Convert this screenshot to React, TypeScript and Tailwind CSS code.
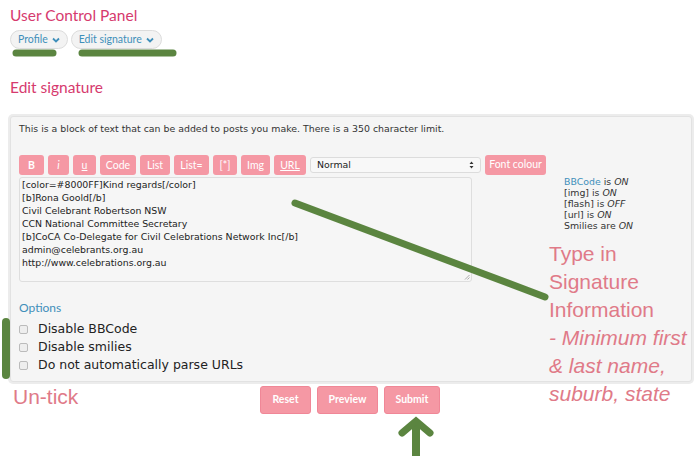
import React from "react";

const toolbar: { label: string; w: string; cls?: string }[] = [
  { label: "B", w: "w-[25px]", cls: "font-bold" },
  { label: "i", w: "w-[21px]", cls: "italic" },
  { label: "u", w: "w-[23px]", cls: "underline" },
  { label: "Code", w: "w-[36px]" },
  { label: "List", w: "w-[30px]" },
  { label: "List=", w: "w-[35px]" },
  { label: "[*]", w: "w-[24px]" },
  { label: "Img", w: "w-[29px]" },
  { label: "URL", w: "w-[32px]", cls: "underline" },
];

const signature = [
  "[color=#8000FF]Kind regards[/color]",
  "[b]Rona Goold[/b]",
  "Civil Celebrant Robertson NSW",
  "CCN National Committee Secretary",
  "[b]CoCA Co-Delegate for Civil Celebrations Network Inc[/b]",
  "admin@celebrants.org.au",
  "http://www.celebrations.org.au",
];

function Chevron() {
  return (
    <svg width="8" height="6" viewBox="0 0 8 6" className="ml-1">
      <path d="M1 1.5 L4 4.5 L7 1.5" stroke="#3f8fba" strokeWidth="1.8" fill="none" />
    </svg>
  );
}

function Pill({ label }: { label: string }) {
  return (
    <div className="flex items-center h-[19px] px-[7px] rounded-full border border-[#dcdcdc] bg-[#f3f3f3] text-[10.5px] text-[#3f8fba]">
      {label}
      <Chevron />
    </div>
  );
}

export default function App() {
  return (
    <div className="relative w-[700px] h-[456px] bg-white overflow-hidden font-['Lato',sans-serif]">
      <div className="px-[10px] pt-[5px]">
        <h1 className="text-[15.5px] text-[#d63a6e] leading-[20px]">User Control Panel</h1>
        <div className="flex gap-[3px] mt-[5px]">
          <Pill label="Profile" />
          <Pill label="Edit signature" />
        </div>
        <h2 className="text-[15.5px] text-[#d63a6e] leading-[20px] mt-[28px]">Edit signature</h2>
      </div>

      <div className="mx-[10px] mt-[19px] w-[682px] h-[266px] border border-[#e2e2e2] rounded-[3px] bg-[#f5f5f5] shadow-[0_0_0_2px_#ececec] font-['DejaVu_Sans',sans-serif] text-[#333]">
        <p className="text-[9.4px] pl-[8px] pt-[6px] leading-[12px]">
          This is a block of text that can be added to posts you make. There is a 350 character limit.
        </p>
        <div className="flex pl-[8px] mt-[20px]">
          <div className="w-[535px]">
            <div className="flex items-center gap-[4px] font-['Lato',sans-serif]">
              {toolbar.map((t) => (
                <button
                  key={t.label}
                  className={`h-[20px] ${t.w} rounded-[3px] bg-[#f598a4] text-white text-[10.5px] leading-none ${t.cls ?? ""}`}
                >
                  {t.label}
                </button>
              ))}
              <div className="w-[171px] h-[16px] border border-[#dcdcdc] rounded-[3px] bg-[#f8f8f8] flex items-center justify-between px-[6px] text-[9.4px] text-[#222] font-['DejaVu_Sans',sans-serif]">
                <span>Normal</span>
                <svg width="5" height="8" viewBox="0 0 5 8">
                  <path d="M0.5 3 L2.5 0.5 L4.5 3 Z M0.5 5 L2.5 7.5 L4.5 5 Z" fill="#333" />
                </svg>
              </div>
              <button className="w-[61px] h-[20px] rounded-[3px] bg-[#f598a4] text-white text-[10.5px]">Font colour</button>
            </div>
            <div className="relative mt-[2px] w-[453px] h-[105px] border border-[#dedede] rounded-[3px] bg-[#f6f6f6] px-[2px] text-[9.4px] leading-[13px] text-[#222]">
              {signature.map((l) => (
                <div key={l}>{l}</div>
              ))}
              <svg width="6" height="6" viewBox="0 0 6 6" className="absolute right-[1px] bottom-[1px]">
                <path d="M1 5.5 L5.5 1 M3.5 5.5 L5.5 3.5" stroke="#999" strokeWidth="0.8" />
              </svg>
            </div>
          </div>
          <div className="ml-[10px] mt-[21px] text-[9.4px] leading-[11px] text-[#333]">
            <div>
              <span className="text-[#3f8fba]">BBCode</span> is <i>ON</i>
            </div>
            <div>
              [img] is <i>ON</i>
            </div>
            <div>
              [flash] is <i>OFF</i>
            </div>
            <div>
              [url] is <i>ON</i>
            </div>
            <div>
              Smilies are <i>ON</i>
            </div>
          </div>
        </div>
        <div className="pl-[8px] mt-[19px]">
          <div className="text-[12px] text-[#3f8fba] leading-[14px] font-['Lato',sans-serif]">Options</div>
          <div className="mt-[7px] flex flex-col gap-[4px] text-[12.5px] leading-[14px] text-[#222]">
            {["Disable BBCode", "Disable smilies", "Do not automatically parse URLs"].map((o) => (
              <label key={o} className="flex items-center">
                <span className="w-[9px] h-[9px] border border-[#bbb] rounded-[2px] bg-[#eee] mr-[10px]" />
                {o}
              </label>
            ))}
          </div>
        </div>
      </div>

      <div className="flex items-start mt-[4px]">
        <div className="pl-[13px] w-[260px] text-[21px] leading-[22px] text-[#e07a88] font-['Liberation_Sans',sans-serif]">
          Un-tick
        </div>
        <div className="flex gap-[6px]">
          {[
            { b: "Reset", w: "w-[51px]" },
            { b: "Preview", w: "w-[61px]" },
            { b: "Submit", w: "w-[56px]" },
          ].map(({ b, w }) => (
            <button
              key={b}
              className={`h-[28px] ${w} rounded-[3px] border border-[#f08797] bg-[#f598a4] text-white text-[10.5px] font-bold`}
            >
              {b}
            </button>
          ))}
        </div>
      </div>

      <div className="absolute left-[549px] top-[240px] text-[21px] leading-[28px] text-[#e07a88] font-['Liberation_Sans',sans-serif]">
        <div>Type in</div>
        <div>Signature</div>
        <div>Information</div>
        <div className="italic">- Minimum first</div>
        <div className="italic">&amp; last name,</div>
        <div className="italic">suburb, state</div>
      </div>

      <svg className="absolute left-0 top-0 pointer-events-none" width="700" height="456" viewBox="0 0 700 456">
        <line x1="16" y1="53" x2="53" y2="53" stroke="#5b8540" strokeWidth="7" strokeLinecap="round" />
        <line x1="82" y1="53" x2="173" y2="53" stroke="#5b8540" strokeWidth="7" strokeLinecap="round" />
        <line x1="295" y1="203" x2="545" y2="297" stroke="#5b8540" strokeWidth="7" strokeLinecap="round" />
        <line x1="6" y1="322" x2="6" y2="375" stroke="#5b8540" strokeWidth="8" strokeLinecap="round" />
        <line x1="416" y1="423" x2="416" y2="456" stroke="#5b8540" strokeWidth="8" />
        <path d="M402 433 L416 421 L430 433" stroke="#5b8540" strokeWidth="7" fill="none" strokeLinecap="round" />
      </svg>
    </div>
  );
}
